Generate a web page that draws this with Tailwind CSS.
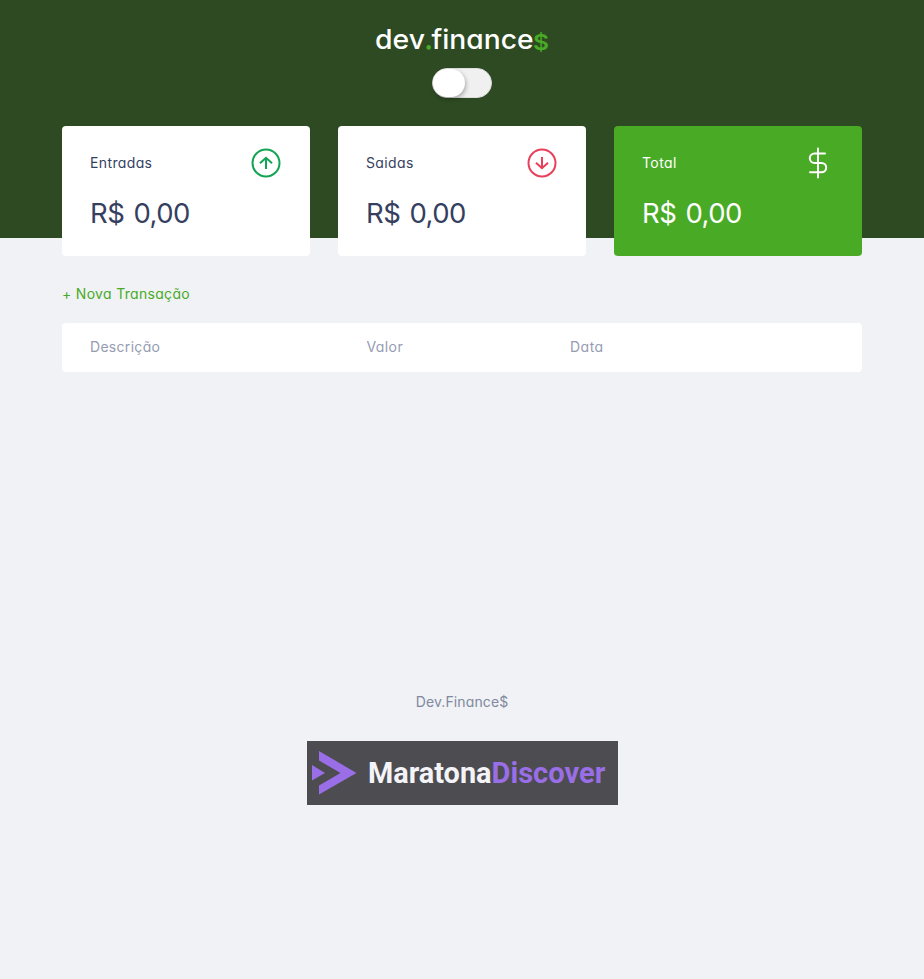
<!DOCTYPE html>
<html lang="pt-br">
<head>
<meta charset="utf-8">
<title>dev.finance$</title>
<script src="https://cdn.jsdelivr.net/npm/@tailwindcss/browser@4"></script>
</head>
<body class="min-h-screen bg-[#f0f2f5] font-['Inter',sans-serif] text-sm text-[#363f5f] [font-feature-settings:'cv11']">
<header class="flex h-[238px] flex-col items-center bg-[#2d4a22] pt-6">
  <svg class="block" width="176" height="36" viewBox="0 0 176 36" font-family="Inter, sans-serif" font-weight="500" font-size="27">
    <text x="1" y="25" fill="#fff" textLength="50" lengthAdjust="spacingAndGlyphs">dev</text>
    <circle cx="54.7" cy="23.4" r="2.3" fill="#49aa26"/>
    <text x="57.5" y="25" fill="#fff" textLength="102" lengthAdjust="spacingAndGlyphs">finance</text>
    <text x="159" y="25.500" fill="#49aa26" font-size="21.500" font-weight="600" textLength="16" lengthAdjust="spacingAndGlyphs">$</text>
  </svg>
  <div class="mt-2 flex h-[30px] w-[60px] rounded-full border border-[#dddddd] bg-[#f0f0f0]">
    <div class="h-[28px] w-8 rounded-full bg-white shadow-[1px_2px_4px_rgba(0,0,0,0.3)]"></div>
  </div>
</header>
<main class="mx-auto w-[800px]">
  <section class="relative -mt-28 grid grid-cols-3 gap-7">
    <div class="h-[130px] rounded bg-white px-7 pt-[21px]">
      <div class="flex h-8 items-center justify-between"><span class="tracking-[0.37px]">Entradas</span>
        <svg width="32" height="32" viewBox="0 0 32 32" fill="none" stroke="#12a454" stroke-width="2"><circle cx="16" cy="16" r="13.5"/><path d="M16 22V11M10 16.300L16 10.800l6 5.500"/></svg>
      </div>
      <p class="mt-[13px] text-[27.5px] leading-[42px] tracking-[-0.55px] whitespace-nowrap [word-spacing:2px]">R$ 0,00</p>
    </div>
    <div class="h-[130px] rounded bg-white px-7 pt-[21px]">
      <div class="flex h-8 items-center justify-between"><span class="tracking-[0.37px]">Saidas</span>
        <svg width="32" height="32" viewBox="0 0 32 32" fill="none" stroke="#e83f5b" stroke-width="2"><circle cx="16" cy="16" r="13.500"/><path d="M16 10v11M10 15.700L16 21.200l6-5.500"/></svg>
      </div>
      <p class="mt-[13px] text-[27.5px] leading-[42px] tracking-[-0.55px] whitespace-nowrap [word-spacing:2px]">R$ 0,00</p>
    </div>
    <div class="h-[130px] rounded bg-[#49aa26] px-7 pt-[21px] text-white">
      <div class="flex h-8 items-center justify-between"><span class="tracking-[0.4px]">Total</span>
        <svg width="32" height="32" viewBox="0 0 32 32" fill="none" stroke="#fff" stroke-width="2" stroke-linecap="round"><path d="M16 1.500v29M23 6.500H12.500a4.700 4.700 0 0 0 0 9.400h7a4.700 4.700 0 0 1 0 9.400H8"/></svg>
      </div>
      <p class="mt-[13px] text-[27.5px] leading-[42px] tracking-[-0.55px] whitespace-nowrap [word-spacing:2px]">R$ 0,00</p>
    </div>
  </section>
  <section class="pt-[27px]">
    <a class="block leading-[21px] tracking-[0.31px] text-[#49aa26]">+ Nova Transação</a>
    <div class="mt-[19px] flex h-[49px] items-center rounded bg-white pb-0.5 pl-7 text-[#969cb3]">
      <span class="w-[276.5px] tracking-[0.3px]">Descrição</span>
      <span class="w-[203.5px] tracking-[0.4px]">Valor</span>
      <span class="tracking-[0.5px]">Data</span>
    </div>
  </section>
</main>
<footer class="mt-[319px] flex flex-col items-center">
  <p class="leading-[22px] tracking-[0.12px] text-[#8189a0]">Dev.Finance$</p>
  <svg class="mt-7 ml-px block" width="311" height="64" viewBox="0 0 311 64" font-family="Roboto, sans-serif" font-weight="700" font-size="29">
    <rect width="311" height="64" fill="#4d4c51"/>
    <path fill="#996ee6" d="M5 24v15.500L18 32zM12 10v9.500L33.500 32 12 44.500V53.500L49.500 32z"/>
    <text x="61" y="41.500" fill="#f4f4f8" textLength="123.500" lengthAdjust="spacingAndGlyphs">Maratona</text>
    <text x="184.500" y="41.500" fill="#996ee6" textLength="114" lengthAdjust="spacingAndGlyphs">Discover</text>
  </svg>
</footer>
</body>
</html>
